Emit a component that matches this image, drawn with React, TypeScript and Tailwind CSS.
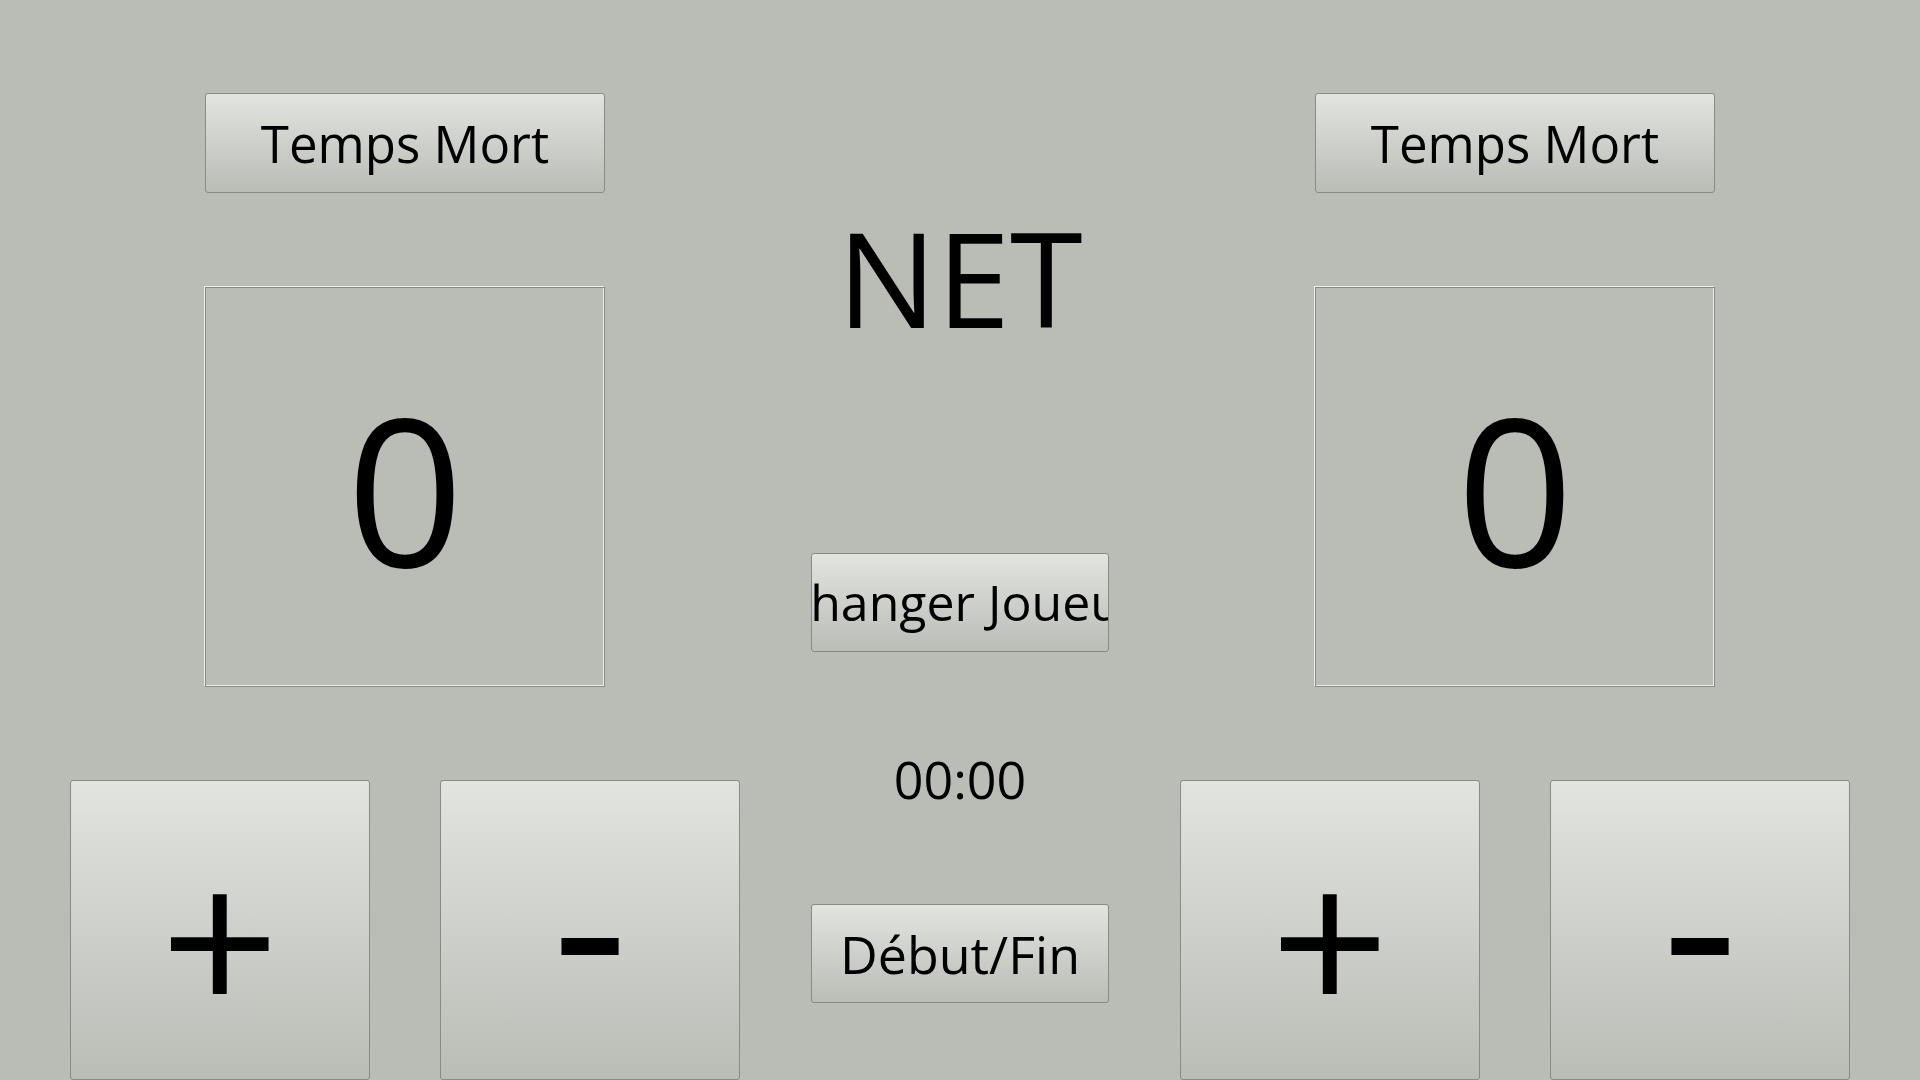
const face =
  "flex items-center justify-center whitespace-nowrap rounded-[3px] border border-[#888a85] bg-gradient-to-b from-[#e2e4df] to-[#babcb6] text-black";
const btn = `${face} overflow-hidden`;

function Side() {
  return (
    <div className="flex w-[670px] flex-col items-center pt-[93px]">
      <button className={`${btn} h-[100px] w-[400px] text-[51px]`}>Temps Mort</button>
      <div className="mt-[94px] flex h-[400px] w-[400px] items-center justify-center border border-[#888a85] text-[205px] leading-none shadow-[-1px_-1px_0_#eeeeec,inset_-1px_-1px_0_#eeeeec]">
        0
      </div>
      <div className="mt-[93px] flex gap-[70px]">
        <button className={`${face} h-[300px] w-[300px] pt-[14px] text-[208px] leading-[1.36]`}>+</button>
        <button className={`${face} h-[300px] w-[300px] pb-[22px] text-[236px] leading-none`}>-</button>
      </div>
    </div>
  );
}

export default function App() {
  return (
    <div className="flex h-screen w-full overflow-hidden bg-[#babdb6] px-[70px] font-['Open_Sans',sans-serif] text-black">
      <Side />
      <div className="mx-[71px] flex w-[298px] flex-col items-center">
        <div className="pt-[211px] text-[132px] leading-none">NET</div>
        <button className={`${btn} mt-[210px] h-[99px] w-[298px] text-[50px]`}>Changer Joueur</button>
        <div className="mt-[101px] text-[52px] leading-none">00:00</div>
        <button className={`${btn} mt-[99px] h-[99px] w-[298px] text-[52px]`}>Début/Fin</button>
      </div>
      <Side />
    </div>
  );
}
